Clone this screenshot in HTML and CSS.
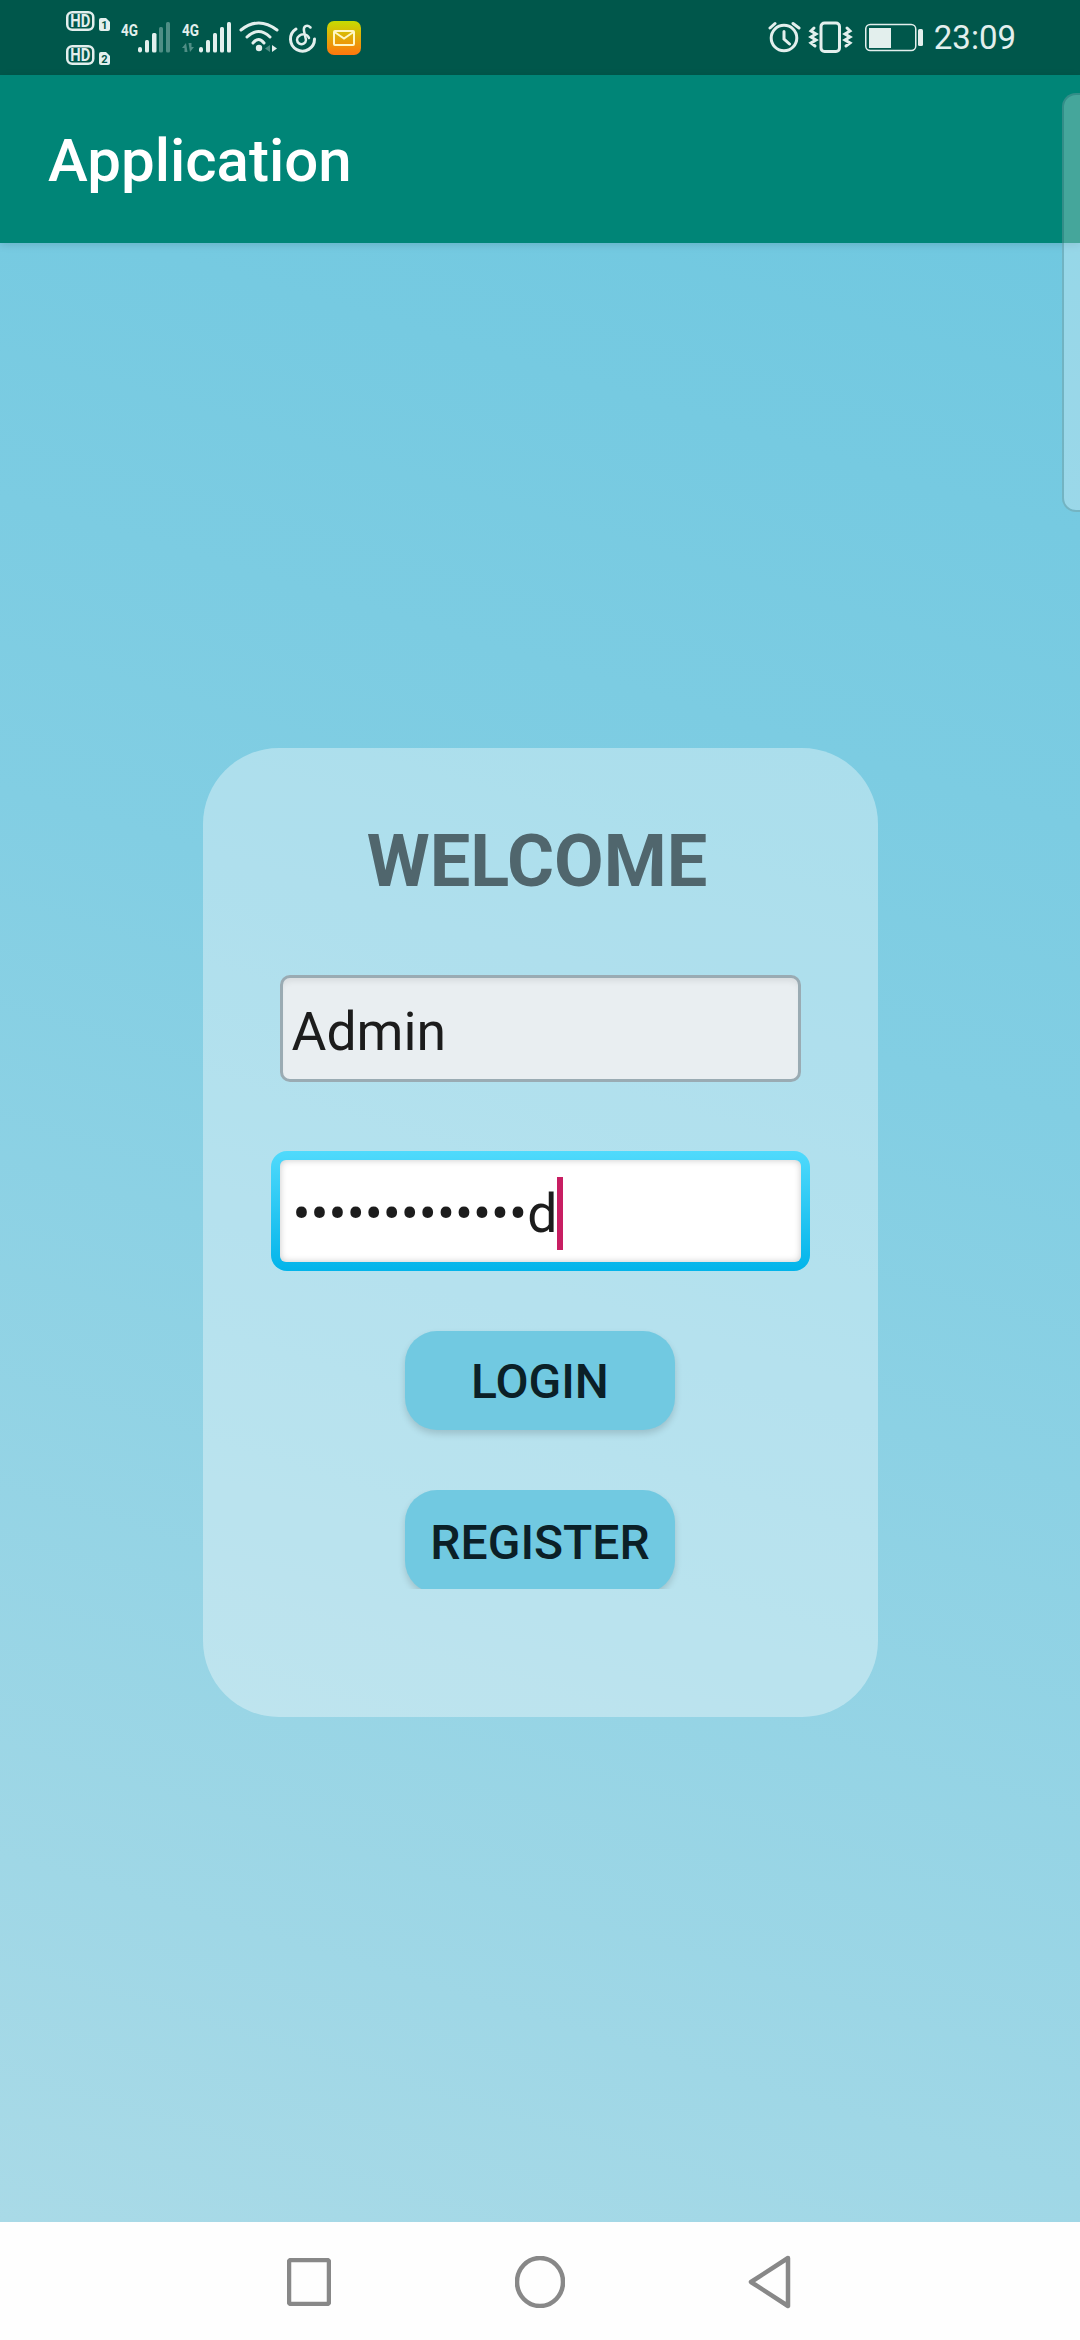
FILE: index.html
```html
<!DOCTYPE html>
<html lang="en">
<head>
    <meta charset="UTF-8">
    <meta name="viewport" content="width=device-width, initial-scale=1.0">
    <title>Application</title>
    <link rel="stylesheet" href="styles.css">
</head>
<body>
    <!-- Status bar -->
    <div class="statusbar">
        <div class="status-left">
            <svg class="sb-icon w50" viewBox="66 0 50 75">
                <rect x="67.250" y="12.250" width="26" height="17.500" rx="5" class="line heavy"/>
                <text x="80.250" y="27" class="hd" textLength="20" lengthAdjust="spacingAndGlyphs">HD</text>
                <path d="M99 20a2 2 0 0 1 2-2h5l4 4v7a2 2 0 0 1-2 2h-7a2 2 0 0 1-2-2z" class="solid"/>
                <text x="104.500" y="29" class="sim">1</text>
                <rect x="67.250" y="46.250" width="26" height="17.500" rx="5" class="line heavy"/>
                <text x="80.250" y="61" class="hd" textLength="20" lengthAdjust="spacingAndGlyphs">HD</text>
                <path d="M99 54a2 2 0 0 1 2-2h5l4 4v7a2 2 0 0 1-2 2h-7a2 2 0 0 1-2-2z" class="solid"/>
                <text x="104.500" y="63" class="sim">2</text>
            </svg>
            <svg class="sb-icon w62" viewBox="116 0 62 75">
                <text x="129.500" y="35.500" class="net" textLength="17" lengthAdjust="spacingAndGlyphs">4G</text>
                <rect x="138" y="47" width="4" height="5.500" rx="2" class="solid"/>
                <rect x="145" y="40" width="4" height="12.500" rx="1.500" class="solid"/>
                <rect x="152" y="33" width="4.500" height="19.500" rx="1.500" class="solid"/>
                <rect x="159" y="27" width="4" height="25.500" rx="1.500" class="dim"/>
                <rect x="166" y="22" width="4" height="30.500" rx="1.500" class="dim"/>
            </svg>
            <svg class="sb-icon w58" viewBox="178 0 58 75">
                <text x="190.500" y="35.500" class="net" textLength="17" lengthAdjust="spacingAndGlyphs">4G</text>
                <path d="M186 43l-4 5h2.500v4h3zM190 52l4-5h-2.500v-4h-3z" class="dim"/>
                <rect x="199" y="47" width="4" height="5.500" rx="2" class="solid"/>
                <rect x="206" y="40" width="4" height="12.500" rx="1.500" class="solid"/>
                <rect x="213" y="33" width="4" height="19.500" rx="1.500" class="solid"/>
                <rect x="220" y="27" width="4" height="25.500" rx="1.500" class="solid"/>
                <rect x="227" y="22" width="4" height="30.500" rx="1.500" class="solid"/>
            </svg>
            <svg class="sb-icon w48" viewBox="236 0 48 75">
                <path d="M241 30Q258.500 16 277 30M247 37Q258.500 26 270 37M253 43Q258.500 36 264 43" class="line thick"/>
                <circle cx="259" cy="48" r="3.200" class="solid"/>
                <path d="M270 45v7l-5-3.500z" class="dim"/>
                <path d="M272 45v7l5-3.500z" class="solid"/>
            </svg>
            <svg class="sb-icon w38" viewBox="284 0 38 75">
                <path d="M296 29A12 12 0 1 0 314.500 39" class="line thick"/>
                <path d="M310.500 27.500C307 24 303 26 304 31L306 40A4.500 4.500 0 1 1 299 36C302 33.500 307.500 33.500 309 38" class="line thin"/>
            </svg>
            <svg class="sb-icon w44" viewBox="322 0 44 75">
                <defs>
                    <linearGradient id="mailFill" x1="0" y1="0" x2="0" y2="1">
                        <stop offset="0" stop-color="#c6dc02"/>
                        <stop offset="1" stop-color="#ff760e"/>
                    </linearGradient>
                </defs>
                <rect x="327" y="21" width="34" height="34" rx="7" fill="url(#mailFill)"/>
                <rect x="334" y="31" width="20" height="14" rx="1" fill="none" stroke="#fff7c4" stroke-width="2"/>
                <path d="M334.500 32l9.500 6.500 9.500-6.500" fill="none" stroke="#fff7c4" stroke-width="2"/>
            </svg>
        </div>
        <div class="status-right">
            <svg class="sb-icon w38" viewBox="767 0 38 75">
                <circle cx="783" cy="38" r="12.800" class="line thick"/>
                <path d="M783 31.500V39L788.500 44M769 28L774 23.500M792 23.500L798 28" class="line thick"/>
            </svg>
            <svg class="sb-icon w55" viewBox="805 0 55 75">
                <rect x="820" y="23" width="18.500" height="28.500" rx="3.500" class="line thick"/>
                <path d="M813 28l-3 3 5 3-5 3 5 3-5 3 4 3M846 28l3 3-5 3 5 3-5 3 5 3-4 3" class="line thick"/>
            </svg>
            <svg class="sb-icon w69" viewBox="860 0 69 75">
                <rect x="864.750" y="24.500" width="50" height="26" rx="4.500" class="line hair"/>
                <rect x="868" y="28" width="22" height="20" class="solid"/>
                <rect x="917" y="29" width="5" height="17" rx="1.500" class="solid"/>
            </svg>
            <span class="clock">23:09</span>
        </div>
    </div>

    <!-- App bar -->
    <header class="appbar">Application</header>

    <!-- Login -->
    <main class="content">
        <form class="card">
            <h1 class="title">WELCOME</h1>
            <div class="field">Admin</div>
            <div class="focus-ring">
                <div class="field field-active">•••••••••••••d<span class="caret"></span></div>
            </div>
            <button type="button" class="btn">LOGIN</button>
            <div class="btn-clip">
                <button type="button" class="btn btn-cut">REGISTER</button>
            </div>
        </form>
    </main>

    <!-- Nav bar -->
    <nav class="navbar">
        <svg class="nav-icon nav-square" viewBox="0 0 44 48">
            <rect x="2" y="2" width="40" height="44" rx="2"/>
        </svg>
        <svg class="nav-icon nav-circle" viewBox="0 0 50 52">
            <ellipse cx="25" cy="26" rx="23" ry="24"/>
        </svg>
        <svg class="nav-icon nav-back" viewBox="0 0 44 54">
            <path d="M40 3L3 27L40 51Z" stroke-linejoin="round"/>
        </svg>
    </nav>

    <!-- Scroll handle over the page -->
    <div class="scroll-handle"></div>
</body>
</html>
```

FILE: styles.css
```css
* {
    margin: 0;
    padding: 0;
    box-sizing: border-box;
    font-family: 'Roboto', sans-serif;
}

body {
    width: 1080px;
    height: 2340px;
    display: flex;
    flex-direction: column;
    position: relative;
    overflow: hidden;
}

/* Status bar */
.statusbar {
    height: 75px;
    flex-shrink: 0;
    background: #00574b;
    display: flex;
    justify-content: space-between;
    padding: 0 64px 0 66px;
}

.status-left, .status-right {
    display: flex;
    align-items: center;
}

.sb-icon {
    height: 75px;
    display: block;
    flex-shrink: 0;
}

.w38 { width: 38px; }
.w44 { width: 44px; }
.w48 { width: 48px; }
.w50 { width: 50px; }
.w55 { width: 55px; }
.w58 { width: 58px; }
.w62 { width: 62px; }
.w69 { width: 69px; }

.line {
    fill: none;
    stroke: #e3efed;
    stroke-width: 2;
}

.heavy {
    stroke-width: 2.5;
}

.hair {
    stroke-width: 1.5;
}

.thick {
    stroke-width: 3;
    stroke-linecap: round;
}

.thin {
    stroke-width: 2.5;
    stroke-linecap: round;
}

.solid {
    fill: #e3efed;
}

.dim {
    fill: #4f8e85;
}

.hd {
    font-size: 18px;
    font-weight: 700;
    fill: #e3efed;
    text-anchor: middle;
}

.sim {
    font-size: 11px;
    font-weight: 700;
    fill: #00574b;
    text-anchor: middle;
}

.net {
    font-size: 17px;
    font-weight: 700;
    fill: #e3efed;
    text-anchor: middle;
}

.clock {
    margin-left: 4px;
    font-size: 33px;
    color: #e3efed;
}

/* App bar */
.appbar {
    height: 168px;
    flex-shrink: 0;
    background: #008577;
    color: #fff;
    font-size: 60px;
    font-weight: 500;
    display: flex;
    align-items: center;
    padding: 3px 0 0 48px;
    box-shadow: 0 2px 8px rgba(0, 0, 0, 0.12);
    position: relative;
    z-index: 1;
}

/* Main area */
.content {
    flex: 1;
    display: flex;
    align-items: center;
    justify-content: center;
    background: linear-gradient(197deg, #70c8e0 0%, #82cee3 38%, #a9dae7 100%);
}

.card {
    width: 675px;
    height: 969px;
    padding-top: 72px;
    background: rgba(255, 255, 255, 0.36);
    border-radius: 76px;
    display: flex;
    flex-direction: column;
    align-items: center;
}

.title {
    font-size: 72px;
    line-height: 84px;
    font-weight: 700;
    color: #50666d;
    margin-bottom: 71px;
    margin-left: -6px;
}

.field {
    width: 521px;
    height: 107px;
    background: #e9eef1;
    border: 3px solid #9aabb3;
    border-radius: 10px;
    box-shadow: inset 0 6px 6px -3px rgba(0, 0, 0, 0.08);
    color: #1c1c1c;
    font-size: 53.5px;
    display: flex;
    align-items: center;
    padding: 6px 0 0 9px;
    margin-bottom: 69px;
}

.focus-ring {
    width: 539px;
    height: 120px;
    padding: 9px;
    border-radius: 16px;
    background: linear-gradient(180deg, #50dafc 0%, #02b4ea 100%);
    margin-bottom: 60px;
}

.field-active {
    width: 100%;
    height: 100%;
    background: #fff;
    border: none;
    border-radius: 6px;
    box-shadow: inset 0 0 7px rgba(0, 0, 0, 0.22);
    padding: 4px 0 0 13px;
    margin: 0;
    white-space: nowrap;
}

.caret {
    width: 6px;
    height: 73px;
    background: #c81e62;
    flex-shrink: 0;
}

.btn {
    width: 270px;
    height: 99px;
    background: #71c9e1;
    border: none;
    border-radius: 32px;
    color: #0b2027;
    font-size: 48px;
    font-weight: 500;
    padding-top: 2px;
    box-shadow: 0 4px 7px rgba(0, 0, 0, 0.15);
    flex-shrink: 0;
    margin-bottom: 60px;
}

.btn-clip {
    height: 99px;
    padding: 0 10px;
    overflow: hidden;
    flex-shrink: 0;
}

.btn-cut {
    height: 103px;
    margin-bottom: 0;
}

/* Nav bar */
.navbar {
    height: 118px;
    flex-shrink: 0;
    background: #fefefe;
    display: grid;
    grid-template-columns: 287px 44px 184px 50px 183px 44px;
    align-items: center;
    padding-top: 2px;
}

.nav-icon {
    fill: none;
    stroke: #888;
    stroke-width: 4.5;
    display: block;
}

.nav-square {
    grid-column: 2;
    width: 44px;
    height: 48px;
}

.nav-circle {
    grid-column: 4;
    width: 50px;
    height: 52px;
}

.nav-back {
    grid-column: 6;
    width: 44px;
    height: 54px;
}

/* Scroll handle */
.scroll-handle {
    position: absolute;
    top: 93px;
    right: -14px;
    width: 32px;
    height: 419px;
    background: rgba(255, 255, 255, 0.27);
    border: 2px solid rgba(0, 70, 80, 0.25);
    border-radius: 14px;
    z-index: 2;
}
```
